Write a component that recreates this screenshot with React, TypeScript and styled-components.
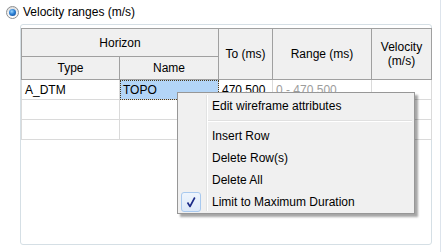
import React from "react";
import styled, { createGlobalStyle } from "styled-components";

const GlobalStyle = createGlobalStyle`
  html, body {
    margin: 0;
    padding: 0;
    background: #ffffff;
  }
  body {
    font-family: "Liberation Sans", Arial, sans-serif;
    font-size: 12px;
    color: #000000;
  }
`;

const Page = styled.div`
  position: relative;
  width: 440px;
  height: 252px;
  border-right: 1px solid #dde4ec;
  overflow: hidden;
`;

const RadioRow = styled.label`
  display: flex;
  align-items: center;
  gap: 4px;
  height: 24px;
  padding-left: 6px;
`;

const RadioDot = styled.span`
  width: 13px;
  height: 13px;
  border-radius: 50%;
  border: 1px solid #8d8f91;
  box-sizing: border-box;
  background: linear-gradient(#dedede, #ffffff);
  display: flex;
  align-items: center;
  justify-content: center;

  &::after {
    content: "";
    width: 7px;
    height: 7px;
    border-radius: 50%;
    background: radial-gradient(circle at 40% 35%, #9ad6ff 0%, #2a7fd4 45%, #0d3d87 100%);
  }
`;

const GroupBox = styled.div`
  margin-left: 20px;
  width: 412px;
  height: 221px;
  box-sizing: border-box;
  border: 1px solid #d5dfe5;
  border-radius: 3px;
  padding-top: 3px;
`;

const Grid = styled.table`
  border-collapse: collapse;
  table-layout: fixed;
  width: 410px;
`;

const HeadCell = styled.th`
  background: #f0f0f0;
  border: 1px solid #a0a0a0;
  font-weight: normal;
  text-align: center;
  vertical-align: middle;
  padding: 0 2px;
  line-height: 14px;
`;

const HeadRow = styled.tr<{ $h: number }>`
  height: ${(p) => p.$h}px;
`;

const BodyRow = styled.tr`
  height: 20px;
`;

const Cell = styled.td<{ $muted?: boolean; $selected?: boolean }>`
  border: 1px solid #dadada;
  padding: 0 3px;
  white-space: nowrap;
  overflow: hidden;
  color: ${(p) => (p.$muted ? "#9d9d9d" : "#000000")};
  background: ${(p) => (p.$selected ? "#b3d5f7" : "#ffffff")};
  outline: ${(p) => (p.$selected ? "1px dotted #4a3b1f" : "none")};
  outline-offset: -1px;
`;

const Menu = styled.div`
  position: absolute;
  left: 177px;
  top: 92px;
  width: 238px;
  box-sizing: border-box;
  background: #f0f0f0;
  border: 1px solid #979797;
  padding: 2px 2px 0 2px;
  box-shadow: 3px 3px 2px rgba(0, 0, 0, 0.35);

  &::before {
    content: "";
    position: absolute;
    left: 28px;
    top: 2px;
    bottom: 2px;
    width: 1px;
    background: #e2e3e3;
    border-right: 1px solid #ffffff;
  }
`;

const MenuItem = styled.div`
  display: flex;
  align-items: center;
  height: 22px;
  white-space: nowrap;
`;

const IconSlot = styled.span<{ $checked?: boolean }>`
  width: 20px;
  height: 20px;
  margin: 0 11px 0 1px;
  box-sizing: border-box;
  border-radius: 3px;
  display: flex;
  align-items: center;
  justify-content: center;
  border: 1px solid ${(p) => (p.$checked ? "#a8c9ef" : "transparent")};
  background: ${(p) => (p.$checked ? "linear-gradient(#eef5fd, #dde9f8)" : "transparent")};
  position: relative;
  z-index: 1;
`;

const Separator = styled.div`
  margin: 3px 0 3px 28px;
  border-top: 1px solid #e0e0e0;
  border-bottom: 1px solid #ffffff;
`;

const CheckMark = () => (
  <svg width="10" height="12" viewBox="0 0 10 12">
    <path d="M1.5 6.5 L4 10.5 L8.8 1.5" fill="none" stroke="#1b2a87" strokeWidth="1.6" strokeLinejoin="round" />
  </svg>
);

export default function App() {
  return (
    <>
      <GlobalStyle />
      <Page>
        <RadioRow>
          <RadioDot />
          <span>Velocity ranges (m/s)</span>
        </RadioRow>
        <GroupBox>
          <Grid>
            <colgroup>
              <col style={{ width: 98 }} />
              <col style={{ width: 99 }} />
              <col style={{ width: 54 }} />
              <col style={{ width: 99 }} />
              <col style={{ width: 60 }} />
            </colgroup>
            <thead>
              <HeadRow $h={28}>
                <HeadCell colSpan={2}>Horizon</HeadCell>
                <HeadCell rowSpan={2}>To (ms)</HeadCell>
                <HeadCell rowSpan={2}>Range (ms)</HeadCell>
                <HeadCell rowSpan={2}>
                  Velocity
                  <br />
                  (m/s)
                </HeadCell>
              </HeadRow>
              <HeadRow $h={23}>
                <HeadCell>Type</HeadCell>
                <HeadCell>Name</HeadCell>
              </HeadRow>
            </thead>
            <tbody>
              <BodyRow>
                <Cell>A_DTM</Cell>
                <Cell $selected>TOPO</Cell>
                <Cell>470.500</Cell>
                <Cell $muted>0 - 470.500</Cell>
                <Cell />
              </BodyRow>
              <BodyRow>
                <Cell />
                <Cell />
                <Cell />
                <Cell />
                <Cell />
              </BodyRow>
              <BodyRow>
                <Cell />
                <Cell />
                <Cell />
                <Cell />
                <Cell />
              </BodyRow>
            </tbody>
          </Grid>
        </GroupBox>
        <Menu>
          <MenuItem>
            <IconSlot />
            Edit wireframe attributes
          </MenuItem>
          <Separator />
          <MenuItem>
            <IconSlot />
            Insert Row
          </MenuItem>
          <MenuItem>
            <IconSlot />
            Delete Row(s)
          </MenuItem>
          <MenuItem>
            <IconSlot />
            Delete All
          </MenuItem>
          <MenuItem>
            <IconSlot $checked>
              <CheckMark />
            </IconSlot>
            Limit to Maximum Duration
          </MenuItem>
        </Menu>
      </Page>
    </>
  );
}
